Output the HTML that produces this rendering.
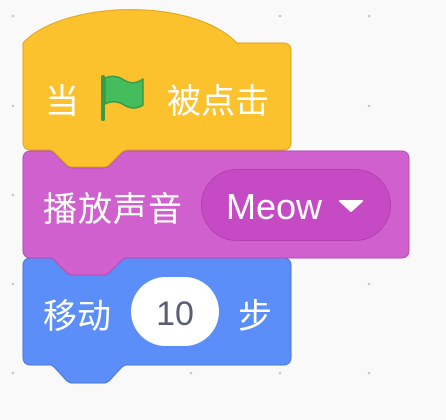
<!DOCTYPE html>
<html><head><style>
html,body{margin:0;padding:0;background:#f9f9f9;width:446px;height:420px;overflow:hidden}
svg{position:absolute;left:0;top:0}
text{font-family:"Liberation Sans","Noto Sans CJK SC",sans-serif;fill:#fff}
</style></head><body>
<svg width="446" height="420" viewBox="0 0 446 420">
<g fill="#c8c8c8">
<circle cx="13" cy="16" r="1.3"/><circle cx="280" cy="16" r="1.3"/><circle cx="369" cy="16" r="1.3"/>
<circle cx="13" cy="106" r="1.3"/><circle cx="369" cy="106" r="1.3"/>
<circle cx="13" cy="195" r="1.3"/><circle cx="13" cy="284" r="1.3"/><circle cx="369" cy="284" r="1.3"/>
<circle cx="13" cy="373" r="1.3"/><circle cx="191" cy="373" r="1.3"/><circle cx="280" cy="373" r="1.3"/><circle cx="369" cy="373" r="1.3"/>
</g>
<path d="M23,266 Q23,258 31,258 L50,258 Q52,258 55,261 L66,272 Q69,275 72,275 L104,275 Q107,275 110,272 L121,261 Q124,258 127,258 L283,258 Q291,258 291,266 L291,357 Q291,365 283,365 L127,365 Q124,365 121,368 L110,380 Q107,383 104,383 L72,383 Q69,383 66,380 L55,368 Q52,365 50,365 L31,365 Q23,365 23,357 Z" fill="#5b8ef8" stroke="#4a78d8" stroke-width="1"/>
<path d="M23,159 Q23,151 31,151 L50,151 Q52,151 55,154 L66,165 Q69,168 72,168 L104,168 Q107,168 110,165 L121,154 Q124,151 127,151 L401,151 Q409,151 409,159 L409,250 Q409,258 401,258 L127,258 Q124,258 121,261 L110,272 Q107,275 104,275 L72,275 Q69,275 66,272 L55,261 Q52,258 50,258 L31,258 Q23,258 23,250 Z" fill="#cf60cd" stroke="#b84db6" stroke-width="1"/>
<path d="M23,43 C60,2 190,-5 237,43 L283,43 Q291,43 291,51 L291,142 Q291,150 283,150 L127,150 Q124,150 121,153 L110,164 Q107,167 104,167 L72,167 Q69,167 66,164 L55,153 Q52,150 50,150 L31,150 Q23,150 23,142 Z" fill="#fbc22e" stroke="#dea51c" stroke-width="1"/>
<path d="M103,77 L103,119" stroke="#3a9a45" stroke-width="4" stroke-linecap="round"/>
<path d="M105,78 Q115,74 124,80 Q134,86 143,79 L143,105 Q134,111 124,105 Q115,99 105,104 Z" fill="#46bd5d" stroke="#3a9a45" stroke-width="1.5" stroke-linejoin="round"/>
<text x="45" y="113" font-size="34">当</text>
<text x="167" y="113" font-size="34">被点击</text>
<text x="43" y="221" font-size="34" letter-spacing="1">播放声音</text>
<rect x="201.5" y="169.5" width="189" height="71" rx="35.5" fill="#c64ac4" stroke="#b440b2"/>
<text x="226" y="219" font-size="36">Meow</text>
<path d="M340,201 L362,201 L351,211 Z" fill="#fff" stroke="#fff" stroke-width="2" stroke-linejoin="round"/>
<text x="43" y="328" font-size="34">移动</text>
<rect x="131" y="277" width="88" height="69" rx="34.5" fill="#fff"/>
<text x="175" y="325" font-size="34" text-anchor="middle" style="fill:#575e75">10</text>
<text x="238" y="328" font-size="34">步</text>
</svg>
</body></html>
